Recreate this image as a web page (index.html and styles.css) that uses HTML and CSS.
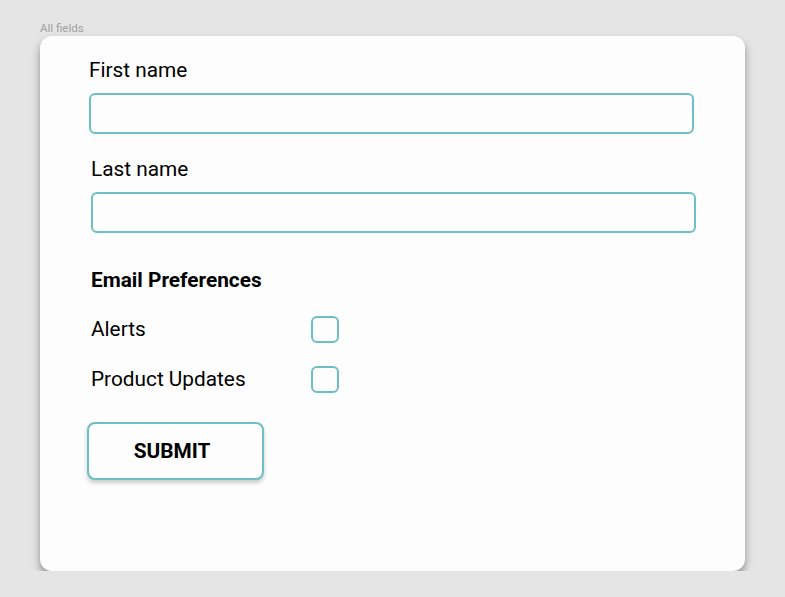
FILE: index.html
```html
<!DOCTYPE html>
<html>
<head>
<meta charset="utf-8">
<link rel="stylesheet" href="styles.css">
</head>
<body>
<div class="page">
  <div class="caption">All fields</div>
  <form class="card">
    <div class="field first">
      <label class="label">First name</label>
      <input class="input" type="text">
    </div>
    <div class="field second">
      <label class="label">Last name</label>
      <input class="input" type="text">
    </div>
    <div class="prefs">
      <div class="prefs-title">Email Preferences</div>
      <div class="check-row">
        <span class="check-label">Alerts</span>
        <span class="checkbox"></span>
      </div>
      <div class="check-row">
        <span class="check-label">Product Updates</span>
        <span class="checkbox"></span>
      </div>
    </div>
    <button class="submit" type="button">SUBMIT</button>
  </form>
</div>
</body>
</html>
```
FILE: styles.css
```css
html, body {
  margin: 0;
  padding: 0;
  background: #e5e5e5;
  font-family: Roboto, "Liberation Sans", sans-serif;
  color: #000;
}
.page {
  padding: 20px 40px 0 40px;
  width: 705px;
}
.caption {
  font-size: 11.5px;
  line-height: 16px;
  color: #a0a0a0;
  height: 16px;
}
.card {
  display: flex;
  flex-direction: column;
  box-sizing: border-box;
  width: 705px;
  height: 535px;
  background: #fdfdfd;
  border-radius: 12px;
  box-shadow: 0 5px 8px rgba(0, 0, 0, 0.38);
  padding: 23px 0 0 49px;
  margin: 0;
}
.field {
  display: flex;
  flex-direction: column;
  gap: 12px;
  width: 605px;
}
.field.second {
  margin-top: 24px;
  margin-left: 2px;
}
.label {
  font-size: 20.8px;
  line-height: 22px;
  height: 22px;
}
.input {
  box-sizing: border-box;
  width: 605px;
  height: 41px;
  border: 2px solid #6bbfc5;
  border-radius: 6px;
  background: #fdfdfd;
  margin: 0;
  padding: 0 10px;
  outline: none;
}
.prefs {
  margin-top: 36px;
  margin-left: 2px;
  display: flex;
  flex-direction: column;
  gap: 23px;
}
.prefs-title {
  font-size: 20.8px;
  font-weight: 700;
  line-height: 22px;
  margin-bottom: 2px;
}
.check-row {
  display: flex;
  align-items: center;
  height: 27px;
}
.check-label {
  width: 220px;
  font-size: 20.8px;
  line-height: 22px;
  margin-top: -1px;
}
.checkbox {
  box-sizing: border-box;
  width: 28px;
  height: 27px;
  border: 2px solid #6bbfc5;
  border-radius: 6px;
}
.submit {
  box-sizing: border-box;
  align-self: flex-start;
  margin-top: 29px;
  margin-left: -2px;
  width: 177px;
  height: 58px;
  border: 2px solid #6bbfc5;
  border-radius: 8px;
  background: #fdfdfd;
  box-shadow: 0 3px 4px rgba(0, 0, 0, 0.2);
  font-family: Roboto, "Liberation Sans", sans-serif;
  font-weight: 700;
  font-size: 20.8px;
  color: #000;
  padding: 0 7px 0 0;
}
```
